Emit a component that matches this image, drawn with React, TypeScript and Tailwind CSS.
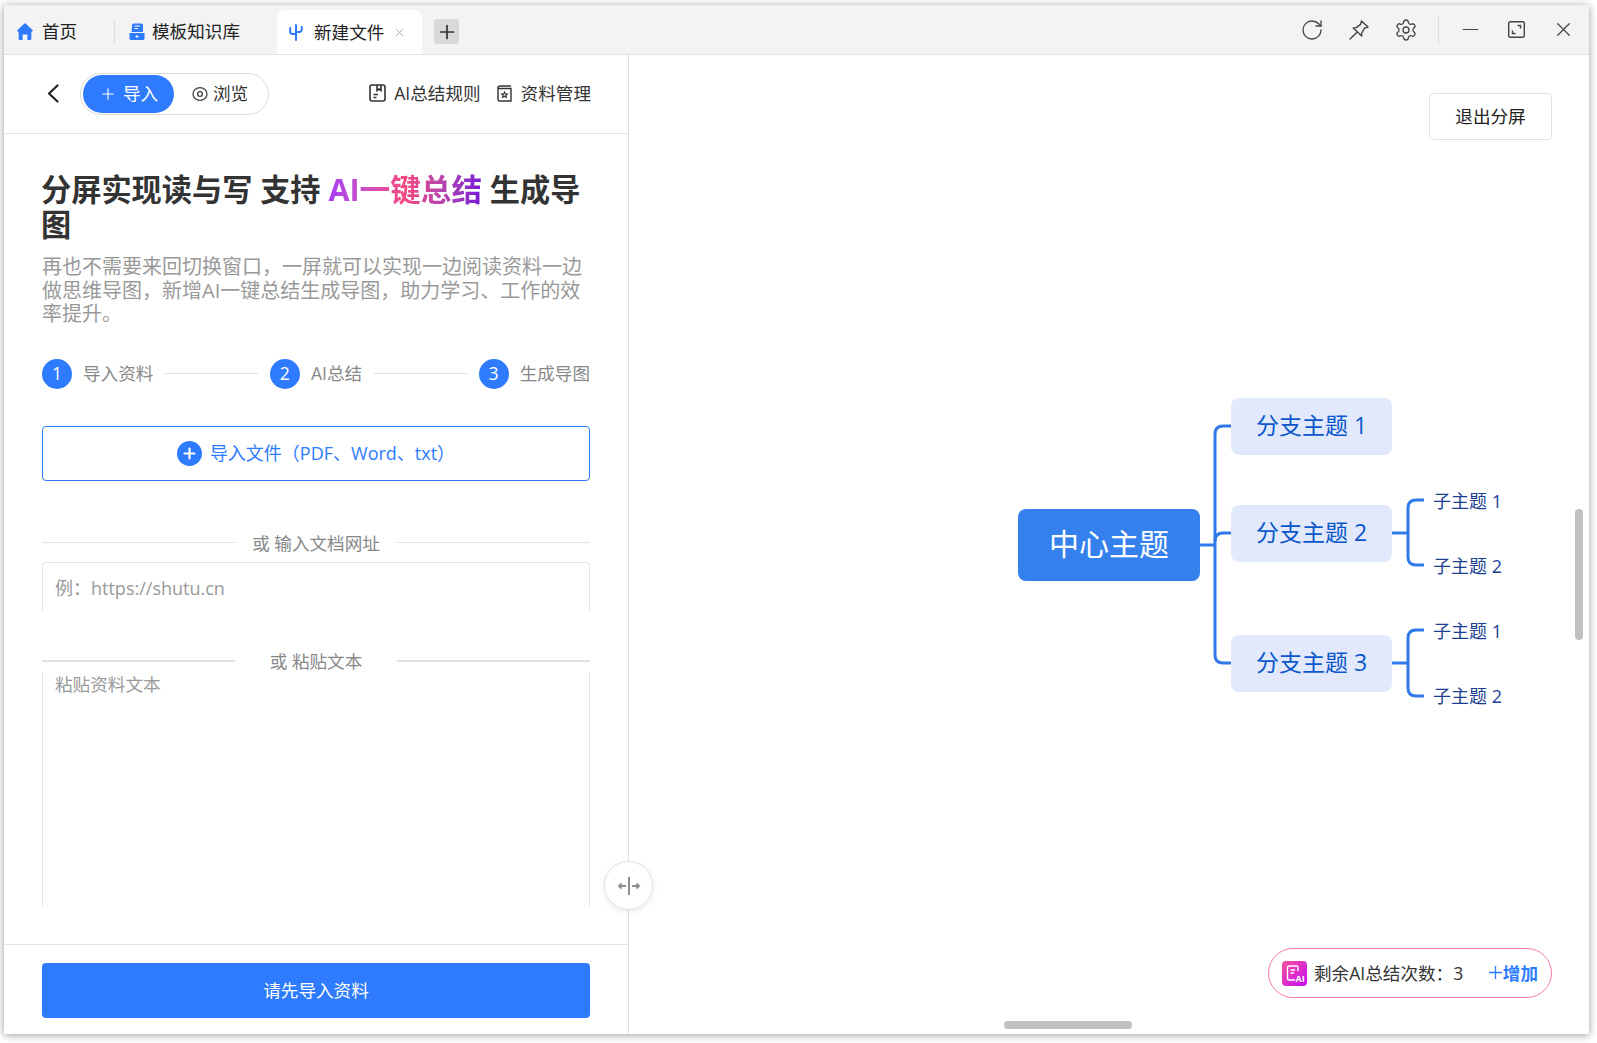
import { Fragment } from "react";
import { Minus, Plus, RotateCw, Settings, X } from "lucide-react";

const steps = [
  { no: 1, label: "导入资料" },
  { no: 2, label: "AI总结" },
  { no: 3, label: "生成导图" },
];

function HomeIcon() {
  return (
    <svg viewBox="0 0 16 17" className="h-[17px] w-[16px] fill-[#2e7bff]">
      <path d="M8 0 16 7.6 14.4 9V15.500A1.500 1.500 0 0 1 12.900 17H10.400V11.600H5.600V17H3.100A1.500 1.500 0 0 1 1.600 15.500V9L0 7.600Z" />
    </svg>
  );
}

function TemplateIcon() {
  return (
    <svg viewBox="0 0 16 17" className="h-[17px] w-[16px]">
      <path d="M3 2.200A2 2 0 0 1 5 .4H12.500A1.500 1.500 0 0 1 14 1.900V9H2.600Z" fill="#2e7bff" />
      <path d="M5.500 3H11M5.500 5.500H9" stroke="#fff" strokeWidth="1" />
      <path d="M.5 10H15.500V15.500A1.500 1.500 0 0 1 14 17H2A1.500 1.500 0 0 1 .5 15.500Z" fill="#2e7bff" />
      <path d="M6.500 13.500H9.500M8 12V15" stroke="#fff" strokeWidth="1" />
    </svg>
  );
}

function SproutIcon() {
  return (
    <svg viewBox="0 0 14 17" className="h-[17px] w-[14px] fill-none stroke-[#2e7bff]" strokeWidth="2" strokeLinecap="round">
      <path d="M7 1V16" />
      <path d="M1.200 4V7.500A2.500 2.500 0 0 0 3.700 10H7" />
      <path d="M12.800 3V5.500A2.500 2.500 0 0 1 10.300 8H7" />
    </svg>
  );
}

function RuleIcon() {
  return (
    <svg viewBox="0 0 17 18" className="h-[18px] w-[17px] fill-none stroke-[#333]" strokeWidth="1.6">
      <rect x="1" y="1" width="15" height="16" rx="2" />
      <path d="M8 1V6.500L10 5 12 6.500V1" />
      <path d="M4.500 10.500H9M4.500 13.500H7.500" />
    </svg>
  );
}

function BookStarIcon() {
  return (
    <svg viewBox="0 0 15 17" className="h-[17px] w-[15px] fill-none stroke-[#333]" strokeWidth="1.4">
      <path d="M1 3A2 2 0 0 1 3 1H14M14 3.500H3A2 2 0 0 1 1 3V14.500A1.500 1.500 0 0 0 2.500 16H14Z" />
      <path d="M7.500 7 8.400 9H10.400L8.900 10.300 9.400 12.300 7.500 11.200 5.600 12.300 6.100 10.300 4.600 9H6.600Z" strokeWidth="1.1" />
    </svg>
  );
}

function PinIcon() {
  return (
    <svg viewBox="0 0 20 20" className="h-5 w-5 fill-none stroke-[#444]" strokeWidth="1.4" strokeLinejoin="round" strokeLinecap="round">
      <path d="M12.500 1 19 7 15.600 8.200 12.500 13.500 12.700 16 4.300 8 7.200 7.600 11.600 4.400Z" />
      <path d="M8 12.200 1 19" />
    </svg>
  );
}

function RestoreIcon() {
  return (
    <svg viewBox="0 0 17 17" className="h-[17px] w-[17px] fill-none stroke-[#444]" strokeWidth="1.4">
      <rect x=".7" y=".7" width="15.600" height="15.600" rx="1.500" />
      <path d="M9.500 4.500H12.500V7.500M4.500 9.500V12.500H7.500" />
    </svg>
  );
}

function DividerLabel({ label, heavy }: { label: string; heavy?: boolean }) {
  const line = heavy ? "h-[2px] bg-[#e0e0e0]" : "h-px bg-[#e2e2e2]";
  return (
    <div className="flex h-6 items-center">
      <div className={`w-[193px] ${line}`} />
      <div className="flex-1 pt-[1px] text-center text-[17.6px] text-[#888]">{label}</div>
      <div className={`w-[193px] ${line}`} />
    </div>
  );
}

function Branch({ label, top }: { label: string; top: string }) {
  return (
    <div className={`absolute left-[213px] flex h-[57px] w-[161px] items-center justify-center rounded-lg bg-[#e2e9fd] pb-[2px] text-[23px] text-[#0b57c9] ${top}`}>
      {label}
    </div>
  );
}

function SubTopic({ label, top }: { label: string; top: string }) {
  return (
    <div className={`absolute left-[415px] whitespace-nowrap text-[18px] leading-6 text-[#1c3f94] ${top}`}>
      {label}
    </div>
  );
}

function MindMap() {
  return (
    <div className="absolute left-[389px] top-[343px] h-[310px] w-[490px]">
      <svg className="absolute inset-0 h-full w-full fill-none stroke-[#2f7ae8]" strokeWidth="3" viewBox="0 0 490 310">
        <path d="M182 147H197" />
        <path d="M213 28H205Q197 28 197 36V257Q197 265 205 265H213" />
        <path d="M197 143Q197 135 205 135H213" />
        <path d="M374 135H390" />
        <path d="M406 102H398Q390 102 390 110V159Q390 167 398 167H406" />
        <path d="M374 265H390" />
        <path d="M406 232H398Q390 232 390 240V290Q390 298 398 298H406" />
      </svg>
      <div className="absolute left-0 top-[111px] flex h-[72px] w-[182px] items-center justify-center rounded-lg bg-[#3481ee] pb-[3px] text-[30px] text-white">
        中心主题
      </div>
      <Branch label="分支主题 1" top="top-0" />
      <Branch label="分支主题 2" top="top-[107px]" />
      <Branch label="分支主题 3" top="top-[237px]" />
      <SubTopic label="子主题 1" top="top-[91px]" />
      <SubTopic label="子主题 2" top="top-[156px]" />
      <SubTopic label="子主题 1" top="top-[221px]" />
      <SubTopic label="子主题 2" top="top-[286px]" />
    </div>
  );
}

export default function App() {
  return (
    <div className="h-[1043px] w-[1597px] overflow-hidden bg-white pl-[4px] pt-[5px] font-['Open_Sans','Noto_Sans_CJK_SC',sans-serif]">
      <div className="relative flex h-[1029px] w-[1585px] flex-col bg-white shadow-[0_1px_8px_rgba(0,0,0,0.4)]">
        {/* title bar */}
        <div className="flex h-[50px] shrink-0 items-end border-b border-[#e3e3e3] bg-[#f3f3f3] text-[17.6px] text-[#222]">
          <div className="flex h-[49px] w-[110px] items-center pl-[13px] pt-[3px]">
            <HomeIcon />
            <span className="ml-[9px]">首页</span>
          </div>
          <div className="mb-[10px] h-[24px] w-px self-end bg-[#dcdcdc]" />
          <div className="flex h-[49px] w-[162px] items-center pl-[14px] pt-[3px]">
            <TemplateIcon />
            <span className="ml-[7px]">模板知识库</span>
          </div>
          <div className="flex h-[44px] w-[145px] items-center rounded-t-lg bg-white pl-[12px] pt-[1px]">
            <SproutIcon />
            <span className="ml-[11px]">新建文件</span>
            <X className="ml-[9px] h-[13px] w-[13px] text-[#999]" strokeWidth={1.5} />
          </div>
          <div className="mb-[10px] ml-[12px] flex h-[25px] w-[25px] items-center justify-center rounded-[3px] bg-[#d9d9d9]">
            <Plus className="h-[22px] w-[22px] text-[#333]" strokeWidth={1.9} />
          </div>
          <div className="ml-auto flex h-[49px] items-center pr-[14px] text-[#444]">
            <RotateCw className="h-[24px] w-[24px]" strokeWidth={1.3} />
            <div className="ml-[25px]"><PinIcon /></div>
            <Settings className="ml-[25px] h-[24px] w-[24px]" strokeWidth={1.3} />
            <div className="ml-[20px] h-[28px] w-px bg-[#dcdcdc]" />
            <Minus className="ml-[19px] h-[25px] w-[25px]" strokeWidth={1.1} />
            <div className="ml-[25px]"><RestoreIcon /></div>
            <X className="ml-[27px] h-[23px] w-[23px]" strokeWidth={1.3} />
          </div>
        </div>

        <div className="flex min-h-0 flex-1">
          {/* left panel */}
          <div className="flex w-[625px] shrink-0 flex-col border-r border-[#dedede]">
            <div className="flex h-[79px] shrink-0 items-center border-b border-[#e3e3e3] pb-[1px] pl-[43px] pr-[37px] text-[17.6px] text-[#333]">
              <svg viewBox="0 0 12 19" className="h-[19px] w-[12px] fill-none stroke-[#222]" strokeWidth="2.2" strokeLinecap="round" strokeLinejoin="round">
                <path d="M10.500 1.500 2 9.500 10.500 17.500" />
              </svg>
              <div className="ml-[21px] flex h-[42px] w-[189px] items-center rounded-full border border-[#dddddd] px-[2px]">
                <div className="flex h-[38px] w-[91px] items-center justify-center gap-[6px] rounded-full bg-[#2e7bff] text-white">
                  <Plus className="h-[18px] w-[18px]" strokeWidth={1.5} />
                  <span>导入</span>
                </div>
                <svg viewBox="0 0 16 16" className="ml-[18px] h-4 w-4 fill-none stroke-[#444]" strokeWidth="1.3">
                  <ellipse cx="8" cy="8" rx="7" ry="6.300" />
                  <circle cx="8" cy="8" r="2.400" />
                </svg>
                <span className="ml-[5px]">浏览</span>
              </div>
              <div className="ml-auto flex items-center">
                <RuleIcon />
                <span className="ml-[8px]">AI总结规则</span>
                <div className="ml-[16px]"><BookStarIcon /></div>
                <span className="ml-[9px]">资料管理</span>
              </div>
            </div>

            <div className="min-h-0 flex-1 px-[38px] pt-[38px]">
              <h1 className="-ml-[1px] text-[30.2px] font-bold leading-[35px] text-[#333]">
                分屏实现读与写 支持{" "}
                <span className="bg-linear-to-r from-[#a83df5] via-[#f5477f] to-[#7a0fd6] bg-clip-text text-[30.6px] text-transparent">AI一键总结</span>{" "}
                生成导图
              </h1>
              <p className="mt-[13px] text-[20px] leading-[23.500px] text-[#999]">
                再也不需要来回切换窗口，一屏就可以实现一边阅读资料一边做思维导图，新增AI一键总结生成导图，助力学习、工作的效率提升。
              </p>

              <div className="mt-[33px] flex h-[30px] items-center text-[17.6px] text-[#888]">
                {steps.map((step, i) => (
                  <Fragment key={step.no}>
                    <div className="flex h-[30px] w-[30px] items-center justify-center rounded-full bg-[#2e7bff] text-white">
                      {step.no}
                    </div>
                    <span className="ml-[11px] whitespace-nowrap">{step.label}</span>
                    {i < 2 ? <div className="mx-[12px] h-px flex-1 bg-[#e0e0e0]" /> : null}
                  </Fragment>
                ))}
              </div>

              <div className="mt-[37px] flex h-[55px] items-center justify-center gap-[8px] rounded border border-[#2e7bff] text-[18px] text-[#2e7bff]">
                <div className="flex h-[25px] w-[25px] items-center justify-center rounded-full bg-[#2e7bff]">
                  <Plus className="h-[17px] w-[17px] text-white" strokeWidth={3} />
                </div>
                <span>导入文件（PDF、Word、txt）</span>
              </div>

              <div className="mt-[50px]">
                <DividerLabel label="或 输入文档网址" />
              </div>
              <input
                placeholder="例：https://shutu.cn"
                className="mt-[7px] block h-[49px] w-full rounded-t border-x border-t border-[#e2e2e2] px-[12px] pt-[2px] text-[18px] outline-none placeholder:text-[#999]"
              />

              <div className="mt-[38px]">
                <DividerLabel label="或 粘贴文本" heavy />
              </div>
              <textarea
                placeholder="粘贴资料文本"
                className="block h-[233px] w-full resize-none border-x border-[#e2e2e2] px-[12px] text-[17.6px] leading-[22px] outline-none placeholder:text-[#999]"
              />
            </div>

            <div className="flex h-[90px] shrink-0 items-start border-t border-[#e3e3e3] px-[38px] pt-[18px]">
              <button className="flex h-[55px] w-full items-center justify-center rounded bg-[#2e7bff] text-[17.6px] text-white">
                请先导入资料
              </button>
            </div>
          </div>

          {/* right panel */}
          <div className="relative min-w-0 flex-1">
            <div className="flex justify-end pr-[37px] pt-[38px]">
              <button className="flex h-[47px] w-[123px] items-center justify-center rounded border border-[#e0e0e0] text-[17.6px] text-[#222]">
                退出分屏
              </button>
            </div>
            <MindMap />

            <div className="absolute bottom-[36px] right-[37px] flex h-[50px] w-[284px] items-center rounded-full border border-[#f57aa8] pl-[13px] text-[17.6px] text-[#333]">
              <svg viewBox="0 0 25 25" className="h-[25px] w-[25px] shrink-0">
                <defs>
                  <linearGradient id="aiBadge" x1="0" y1="0" x2="1" y2="1">
                    <stop offset="0" stopColor="#f6529c" />
                    <stop offset="1" stopColor="#c60cf5" />
                  </linearGradient>
                </defs>
                <rect width="25" height="25" rx="4" fill="url(#aiBadge)" />
                <path d="M13 19H7A1.500 1.500 0 0 1 5.500 17.500V6.500A1.500 1.500 0 0 1 7 5H14.500A1.500 1.500 0 0 1 16 6.500V10M8.500 9H13M8.500 12H12" fill="none" stroke="#fff" strokeWidth="1.400" />
                <text x="13.500" y="21" fill="#fff" fontSize="9" fontWeight="700" fontFamily="Open Sans, sans-serif">AI</text>
              </svg>
              <span className="ml-[7px] whitespace-nowrap">剩余AI总结次数：3</span>
              <span className="ml-auto flex items-center whitespace-nowrap pr-[13px] font-bold text-[#2e7bff]">
                <svg viewBox="0 0 14 14" className="mr-[1px] h-[13px] w-[13px] fill-none stroke-[#2e7bff]" strokeWidth="1.400">
                  <path d="M0 7H14M7 0V14" />
                </svg>
                增加
              </span>
            </div>

            <div className="absolute left-[946px] top-[454px] h-[131px] w-2 rounded-full bg-[#c1c1c1]" />
            <div className="absolute bottom-[5px] left-[375px] h-2 w-[128px] rounded-full bg-[#c1c1c1]" />
          </div>
        </div>

        {/* split handle */}
        <div className="absolute left-[600px] top-[856px] flex h-[49px] w-[49px] items-center justify-center rounded-full border border-[#e2e2e2] bg-white shadow-[0_2px_6px_rgba(0,0,0,0.08)]">
          <svg viewBox="0 0 24 20" className="h-5 w-6 fill-none stroke-[#8c8c8c]" strokeWidth="1.800">
            <path d="M12 1V19" strokeWidth="2" />
            <path d="M9 10H2M4.500 7.500 2 10 4.500 12.500M15 10H22M19.500 7.500 22 10 19.500 12.500" />
          </svg>
        </div>
      </div>
    </div>
  );
}
